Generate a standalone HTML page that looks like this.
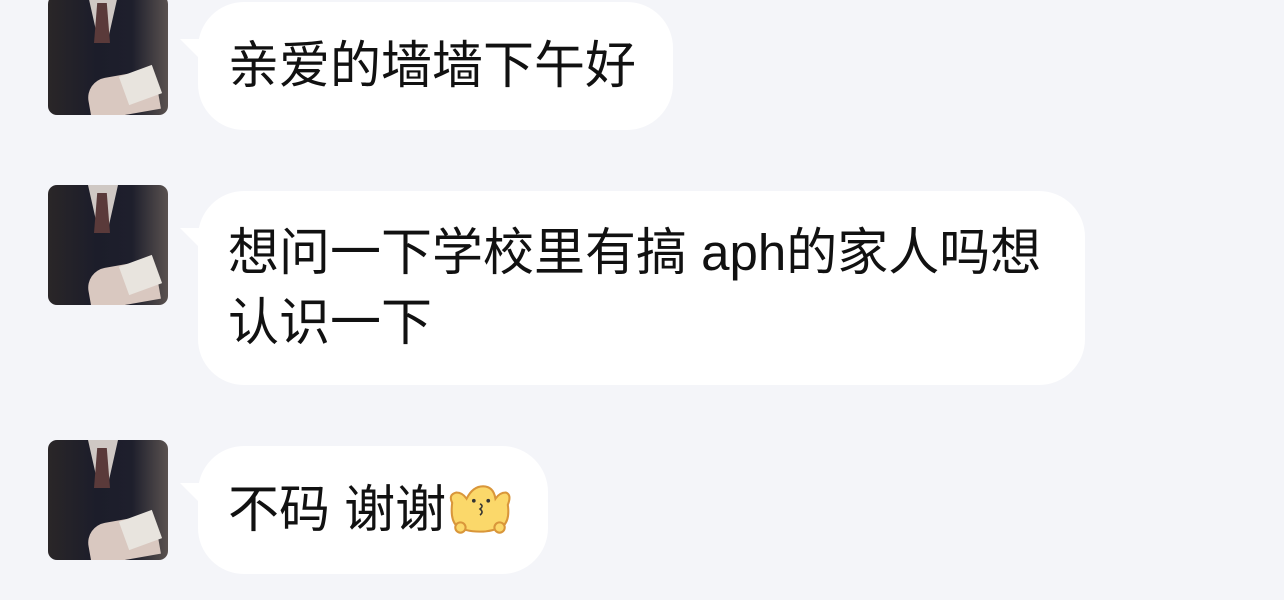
<!DOCTYPE html>
<html><head><meta charset="utf-8"><style>
body{margin:0;width:1284px;height:600px;background:#f4f5f9;overflow:hidden;position:relative;font-family:"Liberation Sans","Noto Sans CJK SC",sans-serif;}
.av{position:absolute;left:48px;width:120px;height:120px;border-radius:9px;overflow:hidden;background:linear-gradient(90deg,#2a2628 0%,#1c1d2a 40%,#1e1f2c 70%,#5a5250 100%);}
.av .sh{position:absolute;left:40px;top:0;width:30px;height:40px;background:#cfc8c4;clip-path:polygon(0 0,100% 0,70% 100%,30% 100%);}
.av .tie{position:absolute;left:46px;top:8px;width:16px;height:40px;background:#5a3a3a;clip-path:polygon(20% 0,80% 0,100% 100%,0 100%);}
.av .hand{position:absolute;left:40px;top:80px;width:70px;height:40px;background:#d9c8c0;border-radius:20px 10px 0 0;transform:rotate(-10deg);}
.av .pp{position:absolute;left:75px;top:75px;width:35px;height:30px;background:#e8e4de;transform:rotate(-20deg);}
.b{position:absolute;left:198px;background:#fff;border-radius:46px;font-size:51px;line-height:70px;color:#111;padding:29px 30px;box-sizing:border-box;white-space:nowrap;}
.b:before{content:"";position:absolute;left:-18px;top:33px;border-right:22px solid #fff;border-top:8px solid transparent;border-bottom:14px solid transparent;transform:skewY(20deg);}
.emo{display:inline-block;vertical-align:-10px;width:68px;height:54px;position:relative;}
</style></head><body>
<div class="av" style="top:-5px"><div class="sh"></div><div class="tie"></div><div class="hand"></div><div class="pp"></div></div>
<div class="av" style="top:185px"><div class="sh"></div><div class="tie"></div><div class="hand"></div><div class="pp"></div></div>
<div class="av" style="top:440px"><div class="sh"></div><div class="tie"></div><div class="hand"></div><div class="pp"></div></div>

<div class="b" style="top:2px;width:475px;height:128px">亲爱的墙墙下午好</div>
<div class="b" style="top:191px;width:887px;height:194px;padding-top:27px">想问一下学校里有搞 aph的家人吗想<br>认识一下</div>
<div class="b" style="top:446px;width:350px;height:128px">不码 谢谢<span class="emo"><svg width="68" height="54" viewBox="0 0 66 50"><path d="M6 18 Q2 10 10 8 Q16 8 20 14 Q26 2 36 2 Q46 2 48 14 Q52 8 58 8 Q64 10 60 20 Q62 34 56 40 Q46 46 33 46 Q18 46 10 40 Q4 34 6 18Z" fill="#fbd86a" stroke="#d9963a" stroke-width="2"/><circle cx="14" cy="42" r="5" fill="#fbd86a" stroke="#d9963a" stroke-width="2"/><circle cx="52" cy="42" r="5" fill="#fbd86a" stroke="#d9963a" stroke-width="2"/><circle cx="27" cy="16" r="1.8" fill="#333"/><circle cx="41" cy="16" r="1.8" fill="#333"/><path d="M33 19 q4 2 0 5 q4 3 0 6" stroke="#333" stroke-width="1.5" fill="none"/></svg></span></div>
</body></html>
